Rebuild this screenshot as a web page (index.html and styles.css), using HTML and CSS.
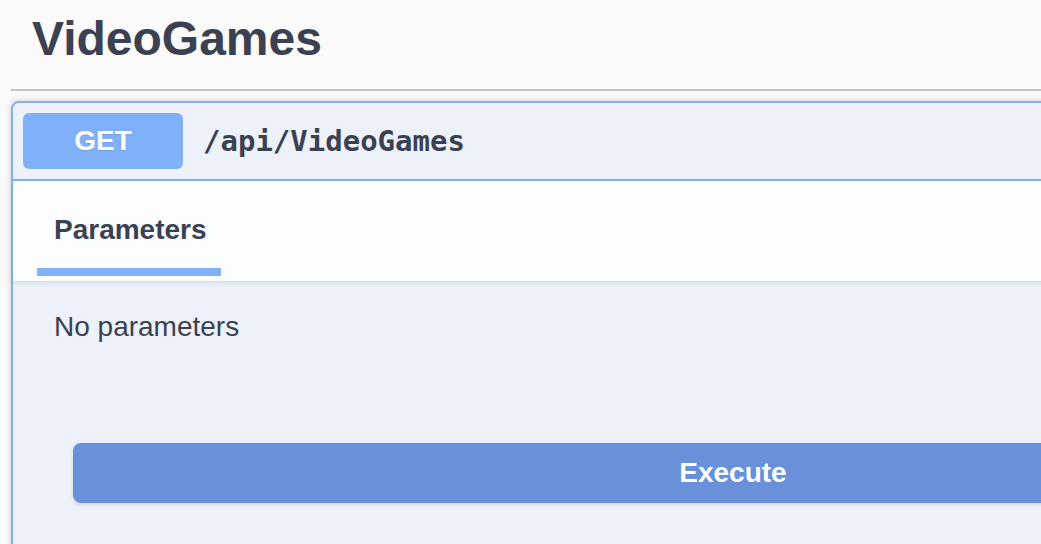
FILE: index.html
```html
<!doctype html>
<html>
  <head>
    <title>VideoGames</title>
    <meta name="viewport" content="width = device-width, initial-scale = 1" />
    <link rel="stylesheet" href="styles.css">
  </head>
  <body>
    <div id="swagger">
      <h3 class="tag-title">VideoGames</h3>
      <div class="opblock">
        <div class="summary">
          <span class="method">GET</span>
          <span class="path">/api/VideoGames</span>
        </div>
        <div class="section-header">
          <div class="tab">Parameters</div>
        </div>
        <div class="params">No parameters</div>
        <div class="execute-wrapper">
          <button class="execute">Execute</button>
        </div>
      </div>
    </div>
  </body>
</html>
```

FILE: styles.css
```css
body,
html {
  margin: 0;
  background-color: #fafafa;
  color: #3b4151;
  font-family: "Liberation Sans", Arial, sans-serif;
  overflow: hidden;
}

#swagger {
  width: 1460px;
  padding-left: 11px;
}

.tag-title {
  margin: 0;
  padding: 10px 0 21px 21px;
  font-size: 48px;
  line-height: 58px;
  font-weight: bold;
  border-bottom: 2px solid #c4c4c4;
}

.opblock {
  margin-top: 10px;
  border: 2px solid #80b0f8;
  border-radius: 8px;
  background-color: #edf2fa;
  box-shadow: 0 0 6px rgba(0, 0, 0, 0.19);
  padding-bottom: 60px;
}

.summary {
  display: flex;
  align-items: center;
  gap: 20px;
  padding: 10px;
  border-bottom: 2px solid #80b0f8;
}

.method {
  display: flex;
  align-items: center;
  justify-content: center;
  width: 160px;
  height: 56px;
  border-radius: 6px;
  background-color: #80b0f8;
  color: white;
  font-size: 28px;
  font-weight: bold;
  text-shadow: 0 1px 0 rgba(0, 0, 0, 0.1);
}

.path {
  font-family: "DejaVu Sans Mono", "Liberation Mono", monospace;
  font-size: 29px;
  font-weight: bold;
}

.section-header {
  display: flex;
  padding: 32px 24px 5px;
  background-color: #fcfdff;
  box-shadow: 0 2px 4px rgba(0, 0, 0, 0.1);
}

.tab {
  padding: 0 14px 21px 17px;
  border-bottom: 8px solid #80b0f8;
  font-size: 28px;
  line-height: 34px;
  font-weight: bold;
}

.params {
  padding: 29px 41px 0;
  font-size: 28px;
  line-height: 34px;
}

.execute-wrapper {
  padding: 99px 0 0 60px;
}

.execute {
  display: block;
  width: 1320px;
  height: 60px;
  border: none;
  border-radius: 8px;
  background-color: #6891da;
  color: white;
  font-family: "Liberation Sans", Arial, sans-serif;
  font-size: 28px;
  font-weight: bold;
  box-shadow: 0 2px 4px rgba(0, 0, 0, 0.1);
  cursor: pointer;
}
```
